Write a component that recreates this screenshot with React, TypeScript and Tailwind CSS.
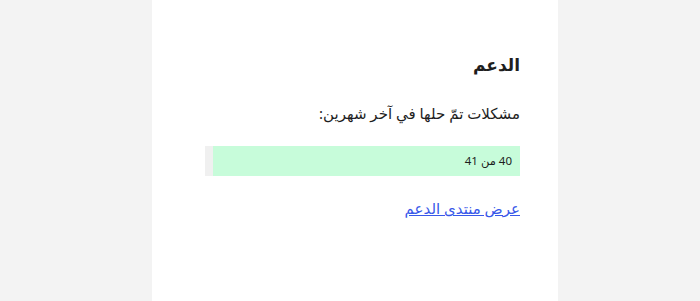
export default function App() {
  const done = 40;
  const total = 41;
  const pct = (done / total) * 100;
  return (
    <div
      dir="rtl"
      className="w-full h-[301px] bg-[#f3f3f3] flex justify-center pl-[10px]"
      style={{ fontFamily: '"Noto Sans", "DejaVu Sans", sans-serif' }}
    >
      <div className="w-[406px] h-full bg-white pr-[38px] pl-[53px] pt-[50px]">
        <h2 className="text-[17px] font-semibold text-[#1e1e1e] leading-[30px]">الدعم</h2>
        <p className="mt-[21px] text-[15px] text-[#1e1e1e] leading-[24px]">مشكلات تمّ حلها في آخر شهرين:</p>
        <div className="mt-[21px] h-[30px] bg-[#f0f0f0] flex">
          <div className="h-full bg-[#c7fcda] flex items-center pr-[8px]" style={{ width: `${pct}%` }}>
            <span className="text-[11.5px] text-[#1e1e1e]">40 من 41</span>
          </div>
        </div>
        <a href="#" className="block mt-[20px] text-[15px] leading-[24px] text-[#3858e9] underline w-fit">عرض منتدى الدعم</a>
      </div>
    </div>
  );
}
